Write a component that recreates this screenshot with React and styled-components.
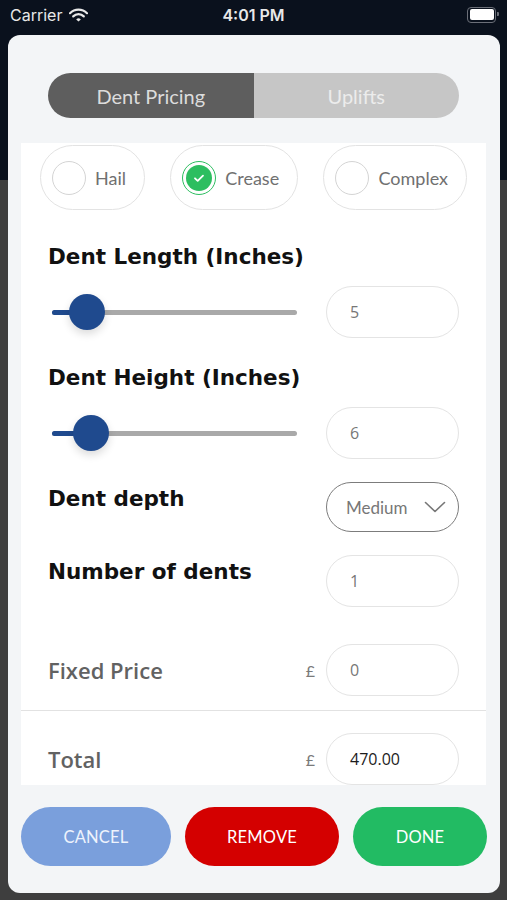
import styled, { createGlobalStyle } from "styled-components";

const Global = createGlobalStyle`
  html, body {
    margin: 0;
    padding: 0;
  }
  body {
    font-family: "Lato", "Open Sans", sans-serif;
  }
`;

const Screen = styled.div`
  width: 507px;
  height: 900px;
  overflow: hidden;
  background: linear-gradient(#0a111d 0, #0a111d 180px, #3e3e3e 180px);
  display: flex;
  flex-direction: column;
`;

const StatusBar = styled.div`
  height: 35px;
  display: flex;
  align-items: center;
  justify-content: space-between;
  padding: 0 11px 0 10px;
  color: #e8e8e8;
  font-family: "Inter", "Roboto", sans-serif;
  font-size: 16px;
  position: relative;
`;

const Carrier = styled.div`
  display: flex;
  align-items: center;
  gap: 7px;
  margin-top: -6px;
`;

const Clock = styled.div`
  position: absolute;
  left: 0;
  right: 0;
  text-align: center;
  font-weight: 600;
  top: 5px;
`;

const Battery = styled.div`
  width: 24px;
  height: 11px;
  border: 1.5px solid #6b6f78;
  border-radius: 4px;
  padding: 1.5px;
  position: relative;
  margin-top: -6px;
  &::before {
    content: "";
    display: block;
    width: 100%;
    height: 100%;
    background: #fff;
    border-radius: 2px;
  }
  &::after {
    content: "";
    position: absolute;
    right: -4px;
    top: 4px;
    width: 2px;
    height: 4px;
    background: #6b6f78;
    border-radius: 0 1px 1px 0;
  }
`;

const Modal = styled.div`
  margin: 0 7px 0 8px;
  height: 858px;
  background: #f3f5f7;
  border-radius: 12px;
  display: flex;
  flex-direction: column;
`;

const Segmented = styled.div`
  margin: 38px 41px 0 40px;
  height: 45px;
  border-radius: 23px;
  overflow: hidden;
  display: flex;
`;

const Segment = styled.div`
  flex: 1;
  display: flex;
  align-items: center;
  justify-content: center;
  padding-top: 1px;
  font-size: 20px;
  background: ${(p) => (p.active ? "#5e5e5e" : "#c6c6c6")};
  color: ${(p) => (p.active ? "#dcdcdc" : "#ececec")};
`;

const Panel = styled.div`
  margin: 25px 14px 0 13px;
  height: 642px;
  background: #fff;
  overflow: hidden;
  display: flex;
  flex-direction: column;
`;

const Section = styled.div`
  padding: 0 27px;
  display: flex;
  flex-direction: column;
`;

const RadioRow = styled.div`
  margin: 2px -8px 0;
  display: flex;
  justify-content: space-between;
`;

const RadioPill = styled.div`
  height: 65px;
  box-sizing: border-box;
  border: 1.5px solid #e3e3e3;
  border-radius: 33px;
  display: flex;
  align-items: center;
  gap: 9px;
  padding: 0 18px 0 11px;
  font-size: 18px;
  color: #707070;
`;

const RadioDot = styled.div`
  width: 34px;
  height: 34px;
  box-sizing: border-box;
  border-radius: 50%;
  border: 1.5px solid ${(p) => (p.checked ? "#2dbe60" : "#d4d4d4")};
  padding: 3px;
  display: flex;
`;

const RadioFill = styled.div`
  flex: 1;
  border-radius: 50%;
  background: #2dbe60;
  display: flex;
  align-items: center;
  justify-content: center;
`;

const Label = styled.div`
  font-family: "DejaVu Sans", "Inter", sans-serif;
  font-weight: 700;
  font-size: 21.5px;
  line-height: 30px;
  color: #111;
  margin-top: ${(p) => p.mt || 0}px;
`;

const GreyLabel = styled.div`
  font-family: "Open Sans", "Lato", sans-serif;
  font-weight: 600;
  font-size: 22px;
  color: #626262;
`;

const Row = styled.div`
  display: flex;
  justify-content: space-between;
  align-items: ${(p) => p.align || "center"};
  margin-top: ${(p) => p.mt || 0}px;
`;

const Slider = styled.div`
  position: relative;
  width: 245px;
  margin-left: 4px;
  height: 52px;
`;

const Track = styled.div`
  position: absolute;
  left: 0;
  right: 0;
  top: 24px;
  height: 5px;
  border-radius: 3px;
  background: #a9a9a9;
`;

const Fill = styled.div`
  position: absolute;
  left: 0;
  top: 24px;
  height: 5px;
  border-radius: 3px;
  background: #1f4a8e;
`;

const Thumb = styled.div`
  position: absolute;
  top: 8px;
  width: 36px;
  height: 36px;
  margin-left: -18px;
  border-radius: 50%;
  background: #1f4a8e;
  box-shadow: 0 4px 8px rgba(0, 0, 0, 0.14);
`;

const Control = styled.div`
  display: flex;
  align-items: center;
  gap: 11px;
`;

const Pound = styled.span`
  font-size: 16px;
  color: #7a7a7a;
`;

const Input = styled.div`
  width: 133px;
  height: 52px;
  box-sizing: border-box;
  border: 1.5px solid #e4e4e4;
  border-radius: 26px;
  padding-left: 23px;
  display: flex;
  align-items: center;
  font-size: 16px;
  color: ${(p) => (p.strong ? "#1c1c1c" : "#777")};
  font-weight: ${(p) => (p.strong ? 500 : 400)};
  font-family: "Open Sans", "Lato", sans-serif;
`;

const Select = styled(Input)`
  height: 50px;
  border-color: #7c7c7c;
  justify-content: space-between;
  padding: 0 12px 0 19px;
  font-size: 17px;
  font-family: "Lato", sans-serif;
`;

const Divider = styled.div`
  height: 2px;
  background: #e2e2e2;
  margin-top: 14px;
`;

const ButtonBar = styled.div`
  margin: 22px 13px 0 13px;
  display: flex;
  justify-content: space-between;
`;

const Button = styled.div`
  width: ${(p) => p.w}px;
  height: 59px;
  border-radius: 30px;
  background: ${(p) => p.bg};
  color: ${(p) => p.fg || "#fff"};
  display: flex;
  align-items: center;
  justify-content: center;
  font-size: 16.5px;
  letter-spacing: 0.2px;
`;

const Wifi = () => (
  <svg width="19" height="14" viewBox="0 0 19 14">
    <path d="M1 5.2a12 12 0 0 1 17 0" fill="none" stroke="#e8e8e8" strokeWidth="2.2" strokeLinecap="round" />
    <path d="M4.2 8.4a7.5 7.5 0 0 1 10.6 0" fill="none" stroke="#e8e8e8" strokeWidth="2.2" strokeLinecap="round" />
    <path d="M7.2 11.4a3.2 3.2 0 0 1 4.6 0L9.5 13.6z" fill="#e8e8e8" />
  </svg>
);

const Check = () => (
  <svg width="14" height="14" viewBox="0 0 14 14">
    <path d="M3 7.3l2.7 2.6L11 4.6" fill="none" stroke="#fff" strokeWidth="1.8" strokeLinecap="round" strokeLinejoin="round" />
  </svg>
);

const Chevron = () => (
  <svg width="22" height="14" viewBox="0 0 22 14">
    <path d="M1.5 2.5l9.5 9 9.5-9" fill="none" stroke="#777" strokeWidth="1.6" strokeLinecap="round" strokeLinejoin="round" />
  </svg>
);

const RangeSlider = ({ pos }) => (
  <Slider>
    <Track />
    <Fill style={{ width: pos }} />
    <Thumb style={{ left: pos }} />
  </Slider>
);

const App = () => {
  return (
    <Screen>
      <Global />
      <StatusBar>
        <Carrier>
          Carrier <Wifi />
        </Carrier>
        <Clock>4:01 PM</Clock>
        <Battery />
      </StatusBar>

      <Modal>
        <Segmented>
          <Segment active>Dent Pricing</Segment>
          <Segment>Uplifts</Segment>
        </Segmented>

        <Panel>
          <Section>
            <RadioRow>
              <RadioPill>
                <RadioDot />
                Hail
              </RadioPill>
              <RadioPill>
                <RadioDot checked>
                  <RadioFill>
                    <Check />
                  </RadioFill>
                </RadioDot>
                Crease
              </RadioPill>
              <RadioPill>
                <RadioDot />
                Complex
              </RadioPill>
            </RadioRow>

            <Label mt={32}>Dent Length (Inches)</Label>
            <Row mt={14}>
              <RangeSlider pos={35} />
              <Input>5</Input>
            </Row>

            <Label mt={25}>Dent Height (Inches)</Label>
            <Row mt={14}>
              <RangeSlider pos={39} />
              <Input>6</Input>
            </Row>

            <Row mt={23} align="flex-start">
              <Label mt={2}>Dent depth</Label>
              <Select>
                Medium
                <Chevron />
              </Select>
            </Row>

            <Row mt={23} align="flex-start">
              <Label mt={2}>Number of dents</Label>
              <Input>1</Input>
            </Row>

            <Row mt={37}>
              <GreyLabel>Fixed Price</GreyLabel>
              <Control>
                <Pound>£</Pound>
                <Input>0</Input>
              </Control>
            </Row>
          </Section>

          <Divider />

          <Section>
            <Row mt={22}>
              <GreyLabel>Total</GreyLabel>
              <Control>
                <Pound>£</Pound>
                <Input strong>470.00</Input>
              </Control>
            </Row>
          </Section>
        </Panel>

        <ButtonBar>
          <Button w={150} bg="#7a9fdc" fg="#eef3fc">CANCEL</Button>
          <Button w={154} bg="#d40000">REMOVE</Button>
          <Button w={134} bg="#22bb63">DONE</Button>
        </ButtonBar>
      </Modal>
    </Screen>
  );
};

export default App;
